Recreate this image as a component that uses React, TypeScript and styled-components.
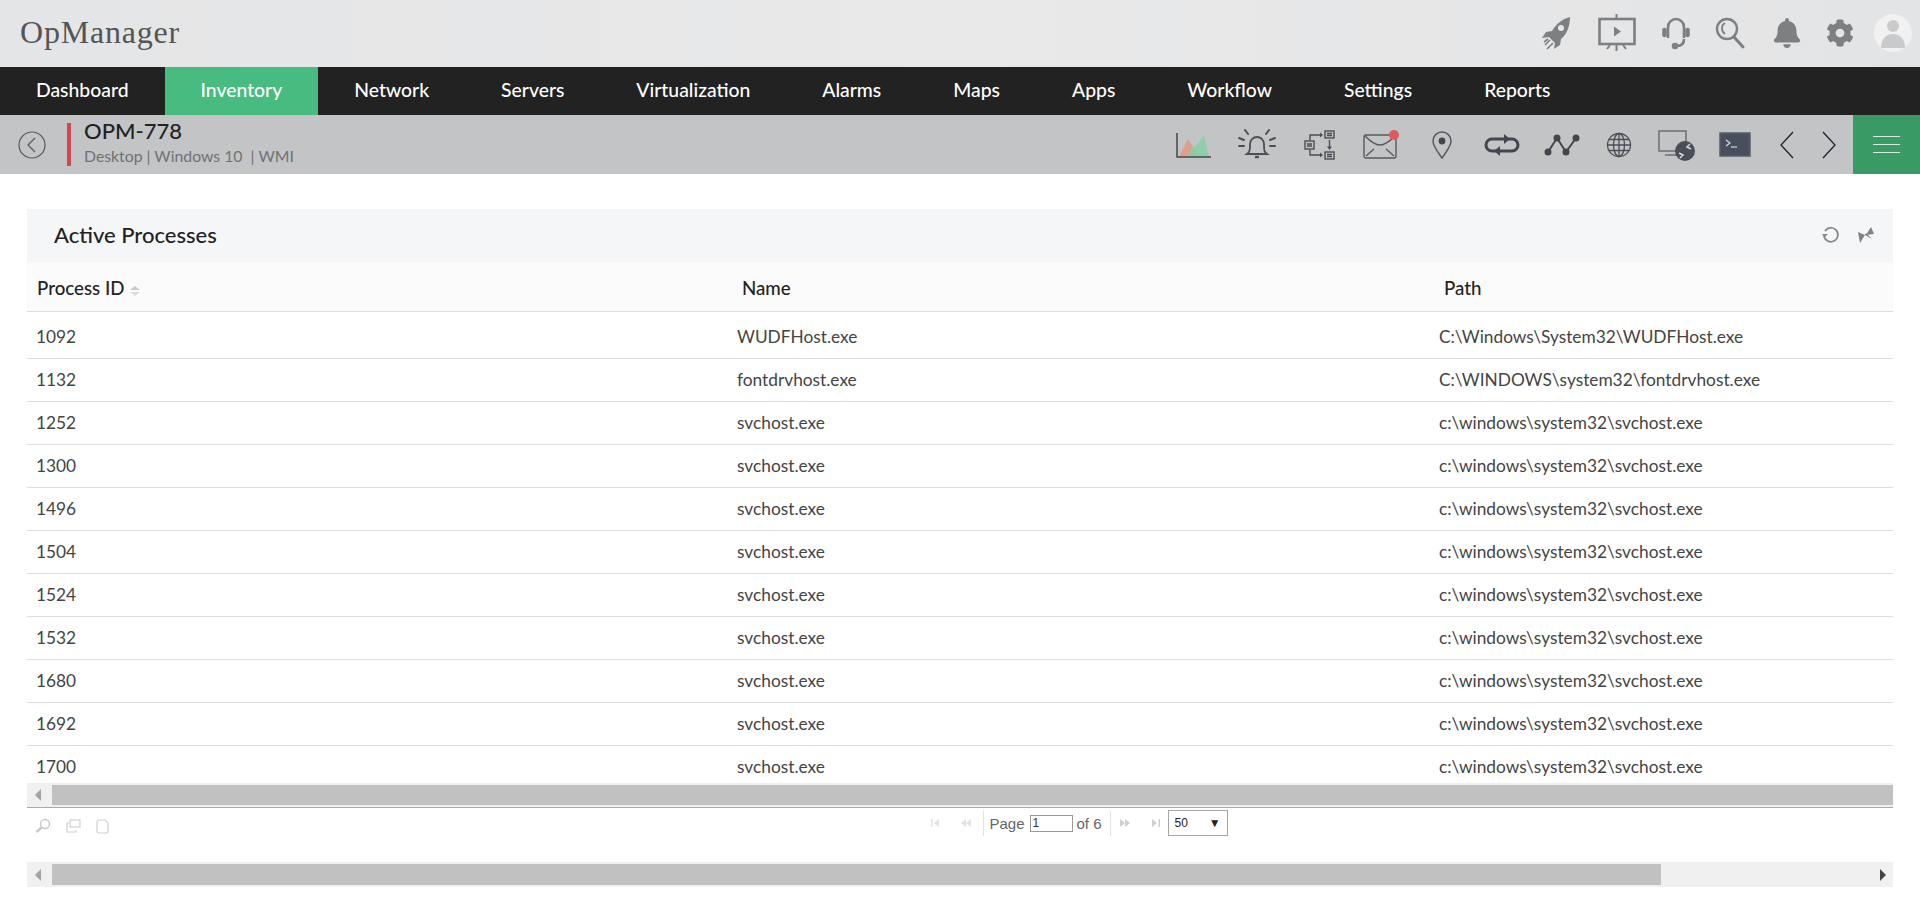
import React from "react";
import styled, { createGlobalStyle } from "styled-components";
import { FaBell, FaCog } from "react-icons/fa";

// Data ---------------------------------------------------------------------------

const navItems = [
  "Dashboard",
  "Inventory",
  "Network",
  "Servers",
  "Virtualization",
  "Alarms",
  "Maps",
  "Apps",
  "Workflow",
  "Settings",
  "Reports",
];

const sys = "c:\\windows\\system32\\svchost.exe";

const rows = [
  ["1092", "WUDFHost.exe", "C:\\Windows\\System32\\WUDFHost.exe"],
  ["1132", "fontdrvhost.exe", "C:\\WINDOWS\\system32\\fontdrvhost.exe"],
  ["1252", "svchost.exe", sys],
  ["1300", "svchost.exe", sys],
  ["1496", "svchost.exe", sys],
  ["1504", "svchost.exe", sys],
  ["1524", "svchost.exe", sys],
  ["1532", "svchost.exe", sys],
  ["1680", "svchost.exe", sys],
  ["1692", "svchost.exe", sys],
  ["1700", "svchost.exe", sys],
];

// Icons --------------------------------------------------------------------------

const RocketIcon = () => (
  <svg width="32" height="36" viewBox="0 0 32 36" fill="#7d8083">
    <path d="M29 2c-8 2-14 7-18 14l-6 1-4 6 7-1 6 6-1 6 6-4 1-6c6-5 9-13 9-22z" />
    <circle cx="20" cy="13" r="3" fill="#e6e7e8" />
    <path d="M9 25l-5 5M12 28l-6 6M7 24l-4 3" stroke="#7d8083" strokeWidth="1.6" fill="none" />
  </svg>
);

const PresentIcon = () => (
  <svg width="38" height="38" viewBox="0 0 38 38" fill="none" stroke="#7d8083">
    <rect x="1.5" y="5" width="35" height="25" strokeWidth="2.6" />
    <path d="M18.5 0v5M18.5 30v7M12 31l-3 4M25 31l3 4" strokeWidth="2" />
    <path d="M16 12.5l7 5-7 5z" fill="#7d8083" stroke="none" />
  </svg>
);

const HeadsetIcon = () => (
  <svg width="28" height="34" viewBox="0 0 28 34" fill="none" stroke="#7d8083" strokeWidth="2.6">
    <path d="M6 22V11a8 8 0 0 1 16 0v11" />
    <path d="M22 23c0 5-3 7-7 7" />
    <circle cx="13" cy="30" r="2" fill="#7d8083" />
    <rect x="1.5" y="13" width="2" height="7" rx="1" fill="#7d8083" />
    <rect x="24.5" y="13" width="2" height="7" rx="1" fill="#7d8083" />
  </svg>
);

const SearchIcon = () => (
  <svg width="30" height="32" viewBox="0 0 30 32" fill="none" stroke="#7d8083">
    <circle cx="12" cy="12" r="10" strokeWidth="2.4" />
    <path d="M10 6c-4 2-4 8 0 11" strokeWidth="1.8" />
    <path d="M19 20l9 10" strokeWidth="3" strokeLinecap="round" />
  </svg>
);

const BackIcon = () => (
  <svg width="28" height="28" viewBox="0 0 28 28" fill="none" stroke="#55585c" strokeWidth="1.2">
    <circle cx="14" cy="14" r="13" />
    <path d="M17 7l-7 7 7 7" />
  </svg>
);

const ChartIcon = () => (
  <svg width="36" height="28" viewBox="0 0 36 28" fill="none">
    <path d="M3 26L12 8l8 12 4 6z" fill="#dca08c" />
    <path d="M11 26l6-10 4-2 7-10 5 22z" fill="#86d0a4" opacity="0.85" />
    <path d="M1 2v24h34" stroke="#43474d" strokeWidth="1.5" />
  </svg>
);

const AlarmIcon = () => (
  <svg width="38" height="32" viewBox="0 0 38 32" fill="none" stroke="#4a4e55" strokeWidth="1.8">
    <path d="M9 25c3-2 3-4 3-10a7 7 0 0 1 14 0c0 6 0 8 3 10z" />
    <path d="M17 28h4" strokeWidth="2.4" />
    <path d="M7 1l3 4M31 1l-3 4M1 9l5 2M37 9l-5 2M1 17h5M37 17h-5" strokeLinecap="round" strokeWidth="2" />
  </svg>
);

const FlowIcon = () => (
  <svg width="32" height="30" viewBox="0 0 32 30" fill="none" stroke="#4a4e55" strokeWidth="1.4">
    <rect x="1" y="11" width="9" height="8" />
    <path d="M3 14h5M3 16h5" />
    <rect x="21" y="1" width="9" height="7" />
    <path d="M23 3.5h5M23 5.5h5" />
    <rect x="21" y="22" width="9" height="7" />
    <path d="M23 24.5h5M23 26.5h5" />
    <path d="M6 10V5h11M6 20v5h11M25.5 10v8" />
    <path d="M16 2.5l3 2.5-3 2.5zM16 22.5l3 2.5-3 2.5zM23 16.5h5l-2.5 3.5z" fill="#4a4e55" stroke="none" />
  </svg>
);

const MailIcon = () => (
  <svg width="38" height="32" viewBox="0 0 38 32" fill="none" stroke="#55595f" strokeWidth="1.4">
    <rect x="1" y="6" width="32" height="23" rx="2" />
    <path d="M2 7c6 6 10 9 15 9s9-3 15-9M3 27l8-7M31 27l-8-7" />
    <circle cx="31" cy="6" r="5" fill="#df5a5e" stroke="none" />
  </svg>
);

const PinIcon = () => (
  <svg width="22" height="30" viewBox="0 0 22 30" fill="none" stroke="#55595f" strokeWidth="1.5">
    <path d="M11 28C6 21 2 16 2 11a9 9 0 0 1 18 0c0 5-4 10-9 17z" />
    <circle cx="11" cy="11" r="3.4" fill="#43474d" stroke="none" />
  </svg>
);

const LoopIcon = () => (
  <svg width="38" height="24" viewBox="0 0 38 24" fill="none" stroke="#43474d" strokeWidth="3">
    <path d="M24 6H9a6 6 0 0 0 0 12h4M14 18h15a6 6 0 0 0 0-12h-4" />
    <path d="M21 1l6 5-6 5zM17 13l-6 5 6 5z" fill="#43474d" stroke="none" />
  </svg>
);

const NodesIcon = () => (
  <svg width="36" height="24" viewBox="0 0 36 24" fill="#43474d" stroke="#43474d" strokeWidth="2">
    <path d="M4 19L13 5l9 14 10-14" fill="none" />
    <circle cx="4" cy="19" r="2.5" />
    <circle cx="13" cy="5" r="2.5" />
    <circle cx="22" cy="19" r="2.5" />
    <circle cx="32" cy="5" r="2.5" />
  </svg>
);

const GlobeIcon = () => (
  <svg width="26" height="26" viewBox="0 0 26 26" fill="none" stroke="#4a4e55" strokeWidth="1.3">
    <circle cx="13" cy="13" r="11.5" />
    <ellipse cx="13" cy="13" rx="5.5" ry="11.5" />
    <path d="M13 1.5v23M1.5 13h23M3 7.5h20M3 18.5h20" />
  </svg>
);

const RemoteIcon = () => (
  <svg width="38" height="32" viewBox="0 0 38 32" fill="none" stroke="#6b6e73" strokeWidth="1.5">
    <path d="M28 20V2H1v20h20M7 26h12" />
    <circle cx="27" cy="22" r="10" fill="#4a4e57" stroke="none" />
    <path d="M21 24l4 2-3 3M33 20l-4-2 3-3" stroke="#d6d7d9" strokeWidth="1.5" />
  </svg>
);

const TermIcon = () => (
  <svg width="32" height="25" viewBox="0 0 32 25" fill="none">
    <rect x="1" y="1" width="30" height="23" fill="#484e5c" stroke="#5b5e63" strokeWidth="1.5" />
    <path d="M7 8l4 3-4 3" stroke="#d8d9db" strokeWidth="1.2" />
    <path d="M12 15h6" stroke="#d8d9db" strokeWidth="1.2" />
  </svg>
);

const ChevronIcon = ({ right }: { right?: boolean }) => (
  <svg width="16" height="28" viewBox="0 0 16 28" fill="none" stroke="#222" strokeWidth="1.3">
    <path d={right ? "M2 1l12 13L2 27" : "M14 1L2 14l12 13"} />
  </svg>
);

const RefreshIcon = () => (
  <svg width="19" height="18" viewBox="0 0 19 18" fill="none" stroke="#85878a" strokeWidth="1.7">
    <path d="M4 5a7 7 0 1 1-1 5" />
    <path d="M1 8h6L3.5 11.5z" fill="#85878a" stroke="none" />
  </svg>
);

const PinTackIcon = () => (
  <svg width="18" height="18" viewBox="0 0 18 18" fill="#808285">
    <path d="M1 6l7 3-5 8zM14 1l3 7-8 1z" />
    <path d="M8 9l7 4-6-6z" />
  </svg>
);

const ZoomGlyph = () => (
  <svg width="16" height="16" viewBox="0 0 16 16" fill="none" stroke="#c9c9c9" strokeWidth="1.5">
    <circle cx="10" cy="6" r="4.5" />
    <path d="M6.5 9.5L1.5 14" strokeWidth="2.4" />
  </svg>
);

const CopyGlyph = () => (
  <svg width="15" height="14" viewBox="0 0 15 14" fill="none" stroke="#cfcfcf" strokeWidth="1.2">
    <path d="M3 4H1v9h9v-2" />
    <rect x="4" y="1" width="10" height="7" />
  </svg>
);

const PageGlyph = () => (
  <svg width="13" height="15" viewBox="0 0 13 15" fill="none" stroke="#cfcfcf" strokeWidth="1.2">
    <path d="M1 3a2 2 0 0 1 2-2h6l3 3v8a2 2 0 0 1-2 2H3a2 2 0 0 1-2-2z" />
  </svg>
);

const PagerArrows = ({ first, double, right }: { first?: boolean; double?: boolean; right?: boolean }) => (
  <PagerGlyph width="14" height="10" viewBox="0 0 14 10" $right={right}>
    {first && <rect x="1" y="1" width="1.5" height="8" />}
    <path d="M9 1v8L4 5z" />
    {double && <path d="M14 1v8L9 5z" />}
  </PagerGlyph>
);

// Component ----------------------------------------------------------------------

const toolIcons: [React.ReactNode, number][] = [
  [<ChartIcon key="chart" />, 62],
  [<AlarmIcon key="alarm" />, 63],
  [<FlowIcon key="flow" />, 63],
  [<MailIcon key="mail" />, 61],
  [<PinIcon key="pin" />, 59],
  [<LoopIcon key="loop" />, 61],
  [<NodesIcon key="nodes" />, 59],
  [<GlobeIcon key="globe" />, 56],
  [<RemoteIcon key="remote" />, 59],
  [<TermIcon key="term" />, 57],
  [<ChevronIcon key="prev" />, 47],
  [<ChevronIcon key="next" right />, 37],
];

const App: React.FC = () => {
  return (
    <>
      <GlobalStyle />
      <TopBar>
        <Logo>OpManager</Logo>
        <TopIcons>
          <RocketIcon />
          <PresentIcon />
          <HeadsetIcon />
          <SearchIcon />
          <BellSlot>
            <FaBell size={30} color="#7d8083" />
          </BellSlot>
          <CogSlot>
            <FaCog size={28} color="#7d8083" />
          </CogSlot>
          <Avatar>
            <svg width="38" height="38" viewBox="0 0 38 38" fill="#c9cacc">
              <circle cx="19" cy="12" r="6" />
              <path d="M7 34c0-9 5-14 12-14s12 5 12 14z" />
            </svg>
          </Avatar>
        </TopIcons>
      </TopBar>

      <Nav>
        {navItems.map((item) => (
          <NavItem key={item} $active={item === "Inventory"}>
            {item}
          </NavItem>
        ))}
      </Nav>

      <SubBar>
        <BackSlot>
          <BackIcon />
        </BackSlot>
        <DeviceInfo>
          <DeviceName>OPM-778</DeviceName>
          <DeviceMeta>Desktop | Windows 10 &nbsp;| WMI</DeviceMeta>
        </DeviceInfo>
        <Tools>
          {toolIcons.map(([icon, w], i) => (
            <Tool key={i} $w={w}>
              {icon}
            </Tool>
          ))}
        </Tools>
        <MenuButton>
          <span />
          <span />
          <span />
        </MenuButton>
      </SubBar>

      <Main>
        <PanelHeader>
          <PanelTitle>Active Processes</PanelTitle>
          <PanelActions>
            <RefreshIcon />
            <PinTackIcon />
          </PanelActions>
        </PanelHeader>

        <TableClip>
          <Table>
            <colgroup>
              <col style={{ width: 701 }} />
              <col style={{ width: 702 }} />
              <col />
            </colgroup>
            <thead>
              <tr>
                <HeadCell>
                  Process ID
                  <SortMark>
                    <i />
                    <b />
                  </SortMark>
                </HeadCell>
                <HeadCell $pad={14}>Name</HeadCell>
                <HeadCell $pad={14}>Path</HeadCell>
              </tr>
            </thead>
            <tbody>
              {rows.map((row, i) => (
                <Row key={row[0]} $first={i === 0}>
                  {row.map((cell, c) => (
                    <Cell key={c} $first={i === 0}>
                      {cell}
                    </Cell>
                  ))}
                </Row>
              ))}
            </tbody>
          </Table>
        </TableClip>

        <Scrollbar>
          <ScrollArrow />
          <ScrollThumb />
        </Scrollbar>

        <Pager>
          <PagerLeft>
            <ZoomGlyph />
            <CopyGlyph />
            <PageGlyph />
          </PagerLeft>
          <PagerCenter>
            <PagerArrows first />
            <PagerArrows double />
            <PagerSep />
            <PageText>Page</PageText>
            <PageInput defaultValue="1" />
            <PageText>of 6</PageText>
            <PagerSep />
            <PagerArrows double right />
            <PagerArrows first right />
            <SizeSelect>
              50
              <span>▼</span>
            </SizeSelect>
          </PagerCenter>
        </Pager>

        <Scrollbar $page>
          <ScrollArrow />
          <ScrollThumb $page />
          <ScrollArrow $right />
        </Scrollbar>
      </Main>
    </>
  );
};

export default App;

// Styled -------------------------------------------------------------------------

const GlobalStyle = createGlobalStyle`
  html, body {
    margin: 0;
    background: #fff;
    font-family: "Lato", "Open Sans", sans-serif;
    overflow: hidden;
  }
`;

const TopBar = styled.header`
  height: 67px;
  display: flex;
  align-items: center;
  justify-content: space-between;
  padding: 0 8px 0 20px;
  background: linear-gradient(90deg, #e4e5e6, #e9e9ea 50%, #e3e4e5);
`;

const Logo = styled.div`
  font-family: "Liberation Serif", serif;
  font-size: 32px;
  letter-spacing: 0.8px;
  color: #555;
  margin-top: -3px;
`;

const TopIcons = styled.div`
  display: flex;
  align-items: center;
  gap: 25.5px;
  margin-top: -2px;
`;

const BellSlot = styled.div`
  display: flex;
  margin-left: 1px;
`;

const CogSlot = styled.div`
  display: flex;
  margin-left: -1px;
`;

const Avatar = styled.div`
  width: 38px;
  height: 38px;
  border-radius: 50%;
  overflow: hidden;
  background: #f1f1f2;
  margin-left: -5.5px;
`;

const Nav = styled.nav`
  height: 48px;
  display: flex;
  background: #222;
`;

const NavItem = styled.a<{ $active?: boolean }>`
  display: flex;
  align-items: center;
  padding: 0 36px 4px;
  font-size: 19.35px;
  font-weight: 500;
  color: #fff;
  background: ${(p) => (p.$active ? "#47bb80" : "transparent")};
`;

const SubBar = styled.div`
  height: 59px;
  display: flex;
  align-items: stretch;
  background: #c3c4c6;
`;

const BackSlot = styled.div`
  width: 67px;
  flex: none;
  display: flex;
  align-items: center;
  padding-left: 18px;
  box-sizing: border-box;
`;

const DeviceInfo = styled.div`
  margin: 8px 0 8px;
  padding-left: 13px;
  border-left: 4px solid #d2484c;
  display: flex;
  flex-direction: column;
  justify-content: center;
`;

const DeviceName = styled.div`
  font-size: 22px;
  line-height: 24px;
  margin-top: -4px;
  font-weight: 500;
  color: #222;
`;

const DeviceMeta = styled.div`
  font-size: 15.8px;
  line-height: 22px;
  margin-top: 2px;
  color: #6f7174;
`;

const Tools = styled.div`
  margin-left: auto;
  display: flex;
  align-items: center;
`;

const Tool = styled.div<{ $w: number }>`
  width: ${(p) => p.$w}px;
  display: flex;
  justify-content: center;
  align-items: center;
`;

const MenuButton = styled.div`
  width: 67px;
  flex: none;
  margin-left: 6px;
  background: #3a9a66;
  display: flex;
  flex-direction: column;
  align-items: center;
  justify-content: center;
  gap: 7px;

  span {
    width: 27px;
    height: 1px;
    background: #d6ecdf;
  }
`;

const Main = styled.main`
  padding: 35px 27px 0;
`;

const PanelHeader = styled.div`
  height: 53px;
  display: flex;
  align-items: center;
  justify-content: space-between;
  padding: 0 18px 2px 27px;
  box-sizing: border-box;
  background: #f5f6f8;
`;

const PanelTitle = styled.h2`
  margin: 0;
  font-size: 22px;
  font-weight: 500;
  color: #222;
`;

const PanelActions = styled.div`
  display: flex;
  align-items: center;
  gap: 17px;
`;

const TableClip = styled.div`
  height: 521px;
  overflow: hidden;
`;

const Table = styled.table`
  width: 100%;
  table-layout: fixed;
  border-collapse: collapse;
`;

const HeadCell = styled.th<{ $pad?: number }>`
  height: 49px;
  padding: 4px 0 0 ${(p) => p.$pad ?? 10}px;
  box-sizing: border-box;
  text-align: left;
  font-size: 18.7px;
  font-weight: 500;
  color: #222;
  background: #fbfbfc;
  border-bottom: 1px solid #dcdcdc;
`;

const SortMark = styled.span`
  display: inline-flex;
  flex-direction: column;
  gap: 2px;
  margin-left: 6px;
  vertical-align: middle;

  i,
  b {
    width: 0;
    height: 0;
    border-left: 5px solid transparent;
    border-right: 5px solid transparent;
  }
  i {
    border-bottom: 4px solid #c9c9c9;
  }
  b {
    border-top: 4px solid #dcdcdc;
  }
`;

const Row = styled.tr<{ $first?: boolean }>`
  height: ${(p) => (p.$first ? 47 : 43)}px;
  border-bottom: 1px solid #dcdcdc;
`;

const Cell = styled.td<{ $first?: boolean }>`
  padding: ${(p) => (p.$first ? "4px" : "0")} 0 0 9px;
  font-size: 17.3px;
  color: #444;
`;

const Scrollbar = styled.div<{ $page?: boolean }>`
  height: 25px;
  display: flex;
  align-items: stretch;
  padding: 2px 0;
  box-sizing: border-box;
  background: #f0f0f0;
  ${(p) => !p.$page && "border-bottom: 1px solid #a9a9a9;"}
`;

const ScrollArrow = styled.div<{ $right?: boolean }>`
  width: 25px;
  flex: none;
  position: relative;
  margin-left: ${(p) => (p.$right ? "auto" : 0)};

  &::after {
    content: "";
    position: absolute;
    top: 50%;
    margin-top: -6px;
    ${(p) =>
      p.$right
        ? "right: 7px; border-left: 6px solid #444;"
        : "left: 8px; border-right: 6px solid #a3a3a3;"}
    border-top: 6px solid transparent;
    border-bottom: 6px solid transparent;
  }
`;

const ScrollThumb = styled.div<{ $page?: boolean }>`
  background: #c1c1c1;
  ${(p) => (p.$page ? "width: 1609px; flex: none;" : "flex: 1;")}
`;

const Pager = styled.div`
  height: 54px;
  position: relative;
  display: flex;
  justify-content: center;
`;

const PagerLeft = styled.div`
  position: absolute;
  left: 8px;
  top: 10px;
  display: flex;
  align-items: center;
  gap: 15px;
`;

const PagerCenter = styled.div`
  display: flex;
  align-items: center;
  height: 30px;
  gap: 5px;
  margin-left: 234px;
  font-family: "Liberation Sans", sans-serif;
`;

const PagerGlyph = styled.svg<{ $right?: boolean }>`
  margin: 0 4px;
  fill: ${(p) => (p.$right ? "#cfcfcf" : "#e2e2e2")};
  ${(p) => p.$right && "transform: scaleX(-1);"}
`;

const PagerSep = styled.div`
  width: 1px;
  height: 25px;
  margin-left: 3px;
  background: #e2e2e2;
`;

const PageText = styled.span`
  font-size: 15px;
  color: #666;
`;

const PageInput = styled.input`
  width: 43px;
  height: 17px;
  padding: 0 0 0 2px;
  margin-right: -1px;
  box-sizing: border-box;
  border: 1px solid #999;
  font-size: 12px;
  font-family: inherit;
  color: #333;
  outline: none;
`;

const SizeSelect = styled.div`
  width: 60px;
  height: 26px;
  margin-left: -2px;
  padding: 0 6px;
  box-sizing: border-box;
  border: 1px solid #a6a6a6;
  display: flex;
  align-items: center;
  justify-content: space-between;
  font-size: 12px;
  color: #222;

  span {
    font-size: 12px;
  }
`;
